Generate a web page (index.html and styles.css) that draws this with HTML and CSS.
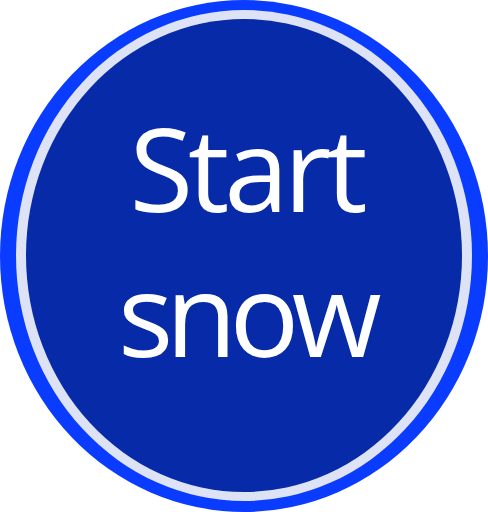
FILE: index.html
```html
<!DOCTYPE html>
<html>
<head>
<meta charset="utf-8">
<link rel="stylesheet" href="styles.css">
</head>
<body>
<div class="btn">
  <div class="ring">
    <div class="face">
      <span class="label"><span class="line-1">Start</span><br><span class="line-2">snow</span></span>
    </div>
  </div>
</div>
</body>
</html>
```
FILE: styles.css
```css
html, body {
  margin: 0;
  padding: 0;
  background: #ffffff;
}
.btn {
  width: 488px;
  height: 512px;
  box-sizing: border-box;
  border-radius: 50%;
  background: #0a3cff;
  padding: 10px 16px 11px 16px;
}
.ring {
  width: 100%;
  height: 100%;
  box-sizing: border-box;
  border-radius: 50%;
  background: #dde3f5;
  padding: 9px 10px 9px 10px;
}
.face {
  width: 100%;
  height: 100%;
  box-sizing: border-box;
  border-radius: 50%;
  background: #062aa8;
  display: flex;
  align-items: center;
  justify-content: center;
  padding-bottom: 31px;
  padding-left: 4px;
}
.label {
  font-family: "Open Sans", sans-serif;
  font-size: 116px;
  line-height: 145px;
  color: #ffffff;
  text-align: center;
}
.line-1 {
  letter-spacing: -5px;
}
.line-2 {
  letter-spacing: -7.5px;
}
```
